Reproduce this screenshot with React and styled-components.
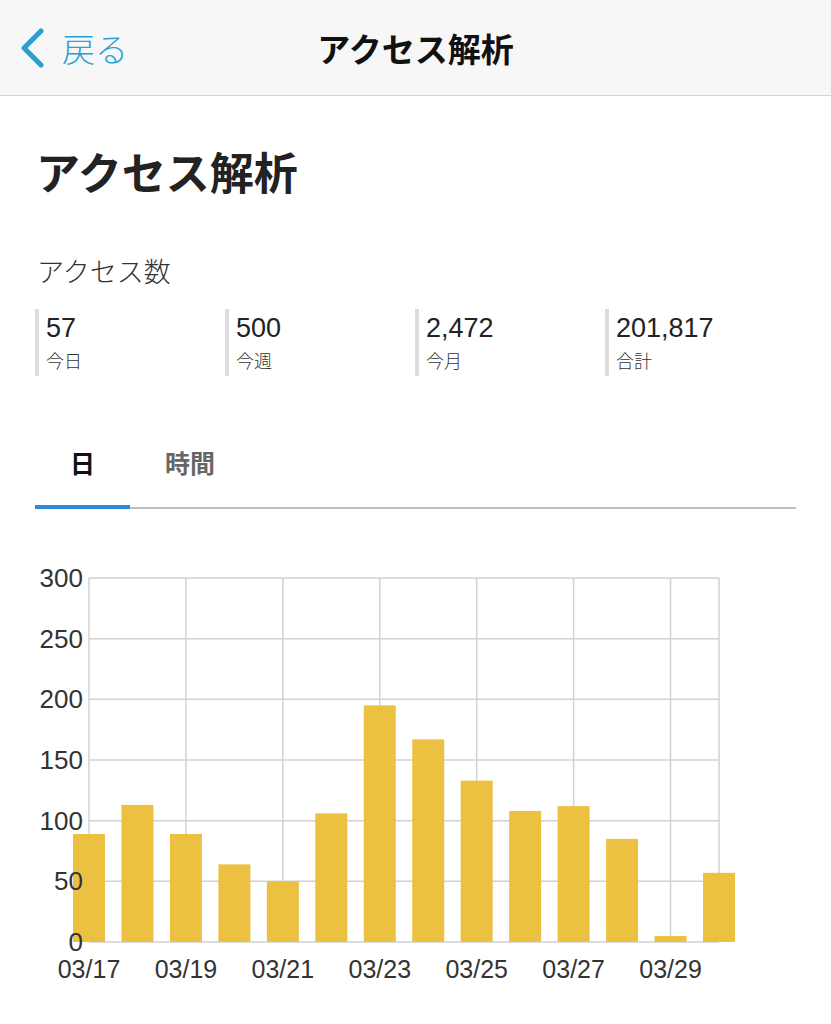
import React, {useState} from "react";
import styled, {createGlobalStyle} from "styled-components";

const GlobalStyle = createGlobalStyle`
  html, body {
    margin: 0;
    padding: 0;
    background: #ffffff;
  }
  body {
    font-family: "Liberation Sans", "Noto Sans CJK JP", sans-serif;
    color: #222;
  }
`;

const JP = `"Noto Sans CJK JP", "Liberation Sans", sans-serif`;

const NavBar = styled.header`
  height: 95px;
  background: #f7f7f7;
  border-bottom: 1px solid #d6d6d6;
  display: grid;
  grid-template-columns: 1fr auto 1fr;
  align-items: center;
`;

const BackButton = styled.button`
  justify-self: start;
  display: flex;
  align-items: center;
  gap: 16px;
  border: 0;
  background: none;
  padding: 0 0 0 20px;
  color: #2a9fd3;
  font-family: ${JP};
  font-size: 33px;
  font-weight: 300;
  cursor: pointer;
`;

const NavTitle = styled.h1`
  margin: 0;
  font-family: ${JP};
  font-size: 33px;
  font-weight: 700;
  color: #111;
`;

const Content = styled.main`
  padding: 49px 35px 40px 35px;
`;

const PageTitle = styled.h2`
  margin: 0;
  font-family: ${JP};
  font-size: 44px;
  line-height: 52px;
  font-weight: 700;
  color: #222;
  padding-left: 1px;
`;

const SectionLabel = styled.div`
  margin-top: 56px;
  font-family: ${JP};
  font-size: 27px;
  line-height: 36px;
  font-weight: 300;
  color: #333;
  padding-left: 2px;
`;

const StatRow = styled.div`
  margin-top: 20px;
  display: grid;
  grid-template-columns: repeat(4, 190px);
`;

const Stat = styled.div`
  border-left: 4px solid #dcdcdc;
  padding: 2px 0 0 7px;
  height: 65px;
`;

const StatValue = styled.div`
  font-family: "Liberation Sans", sans-serif;
  font-size: 27px;
  line-height: 34px;
  color: #222;
`;

const StatLabel = styled.div`
  font-family: ${JP};
  font-size: 18px;
  line-height: 30px;
  font-weight: 300;
  color: #333;
`;

const Tabs = styled.nav`
  margin-top: 67px;
  display: flex;
  border-bottom: 2px solid #b8c0c3;
`;

const Tab = styled.button`
  border: 0;
  background: none;
  margin-bottom: -2px;
  padding: 0 35px 24px 35px;
  height: 38px;
  font-family: ${JP};
  font-size: 25px;
  font-weight: 700;
  color: ${p => (p.$active ? "#111" : "#666")};
  border-bottom: 4px solid ${p => (p.$active ? "#2d8ad6" : "transparent")};
  cursor: pointer;
  box-sizing: content-box;
`;

const ChartBox = styled.div`
  margin-top: 52px;
`;

const data = [89, 113, 89, 64, 50, 106, 195, 167, 133, 108, 112, 85, 5, 57];
const labels = ["03/17", "03/18", "03/19", "03/20", "03/21", "03/22", "03/23", "03/24", "03/25", "03/26", "03/27", "03/28", "03/29", "03/30"];

const BarChart = () => {
    const left = 54;
    const right = 684;
    const top = 17;
    const bottom = 381;
    const max = 300;
    const step = (right - left) / (data.length - 1);
    const y = v => bottom - (v / max) * (bottom - top);
    const ticks = [0, 50, 100, 150, 200, 250, 300];

    return (
        <svg width="762" height="430" viewBox="0 0 762 430">
            {ticks.map(t => (
                <line key={"h" + t} x1={left} x2={right} y1={y(t)} y2={y(t)} stroke="#d2d2d2" strokeWidth="1.5"/>
            ))}
            {data.map((_, i) => (i % 2 === 0 ? (
                <line key={"v" + i} x1={left + i * step} x2={left + i * step} y1={top} y2={bottom} stroke="#d2d2d2" strokeWidth="1.5"/>
            ) : null))}
            <line x1={right} x2={right} y1={top} y2={bottom} stroke="#d2d2d2" strokeWidth="1.5"/>
            {data.map((v, i) => (
                <rect key={"b" + i} x={left + i * step - 16} y={y(v)} width="32" height={bottom - y(v)} fill="#ecc142"/>
            ))}
            {ticks.map(t => (
                <text key={"t" + t} x="48" y={y(t) + 9} textAnchor="end" fontSize="26" fill="#333"
                      fontFamily="'Liberation Sans', sans-serif">{t}</text>
            ))}
            {labels.map((l, i) => (i % 2 === 0 ? (
                <text key={"l" + i} x={left + i * step} y="417" textAnchor="middle" fontSize="25" fill="#333"
                      fontFamily="'Liberation Sans', sans-serif">{l}</text>
            ) : null))}
        </svg>
    );
};

const stats = [
    {value: "57", label: "今日"},
    {value: "500", label: "今週"},
    {value: "2,472", label: "今月"},
    {value: "201,817", label: "合計"},
];

export const App = () => {
    const [tab, setTab] = useState("day");

    return (
        <React.Fragment>
            <GlobalStyle/>
            <NavBar>
                <BackButton>
                    <svg width="26" height="40" viewBox="0 0 26 40">
                        <polyline points="21,3 4,20 21,37" fill="none" stroke="#2a9fd3" strokeWidth="5"
                                  strokeLinecap="round" strokeLinejoin="round"/>
                    </svg>
                    戻る
                </BackButton>
                <NavTitle>アクセス解析</NavTitle>
                <div/>
            </NavBar>
            <Content>
                <PageTitle>アクセス解析</PageTitle>
                <SectionLabel>アクセス数</SectionLabel>
                <StatRow>
                    {stats.map(s => (
                        <Stat key={s.label}>
                            <StatValue>{s.value}</StatValue>
                            <StatLabel>{s.label}</StatLabel>
                        </Stat>
                    ))}
                </StatRow>
                <Tabs>
                    <Tab $active={tab === "day"} onClick={() => setTab("day")}>日</Tab>
                    <Tab $active={tab === "hour"} onClick={() => setTab("hour")}>時間</Tab>
                </Tabs>
                <ChartBox>
                    <BarChart/>
                </ChartBox>
            </Content>
        </React.Fragment>
    );
};

export default App;
